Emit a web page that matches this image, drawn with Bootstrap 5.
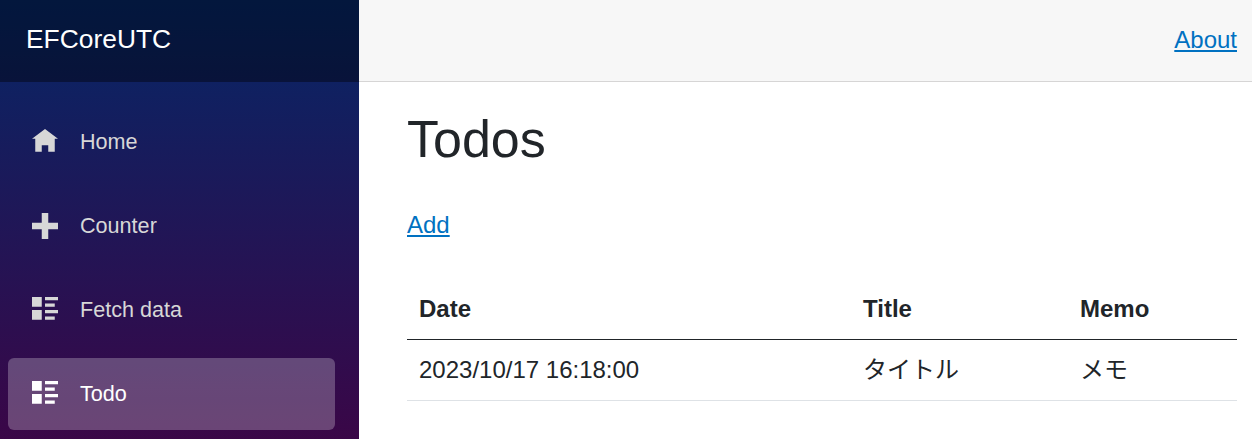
<!DOCTYPE html>
<html lang="en">
  <head>
    <meta charset="UTF-8" />
    <meta name="viewport" content="width=device-width, initial-scale=1" />
    <title>Todos</title>
    <link href="https://cdn.jsdelivr.net/npm/bootstrap@5.3.3/dist/css/bootstrap.min.css" rel="stylesheet" />
    <script src="https://cdn.jsdelivr.net/npm/bootstrap@5.3.3/dist/js/bootstrap.bundle.min.js"></script>
    <style>
      html, body {
        height: 100%;
        overflow: hidden;
      }

      body {
        font-family: "Liberation Sans", Arial, "Noto Sans CJK JP", sans-serif;
        font-size: 24px;
        color: #212529;
      }

      a {
        color: #0071c1;
      }

      .app-shell {
        height: 439px;
      }

      .side-panel {
        width: 359px;
        background: linear-gradient(180deg, #052767 0, #3a0647 440px);
      }

      .brand-row {
        height: 82px;
        background: rgba(0, 0, 0, 0.4);
        padding-left: 26px;
        padding-bottom: 2px;
      }

      .brand-row a {
        font-size: 26.4px;
        color: #fff;
        text-decoration: none;
      }

      .side-menu {
        padding: 24px 24px 0 8px;
        gap: 12px;
      }

      .side-menu .nav-link {
        height: 72px;
        padding: 0 0 0 24px;
        font-size: 21.6px;
        color: #d7d7d7;
        border-radius: 6px;
      }

      .side-menu .nav-link.active {
        background: rgba(255, 255, 255, 0.25);
        color: #fff;
      }

      .menu-icon {
        width: 26px;
        height: 26px;
        margin-right: 22px;
        fill: currentColor;
        flex-shrink: 0;
      }

      .top-strip {
        height: 82px;
        background: #f7f7f7;
        border-bottom: 1px solid #d6d5d5;
        padding-right: 15px;
        padding-bottom: 2px;
      }

      .page-body {
        padding: 0 15px 0 48px;
      }

      .page-body h1 {
        font-size: 52px;
        font-weight: 400;
        line-height: 1.2;
        margin: 26px 0 37px;
      }

      .add-line {
        margin-bottom: 36px;
      }

      .todo-table {
        color: #212529;
      }

      .todo-table th,
      .todo-table td {
        padding: 12px;
      }

      .todo-table thead th {
        border-bottom-color: #212529;
      }

      .col-date {
        width: 444px;
      }

      .col-title {
        width: 217px;
      }
    </style>
  </head>
  <body>
    <div class="app-shell d-flex">
      <div class="side-panel flex-shrink-0">
        <div class="brand-row d-flex align-items-center">
          <a href="#">EFCoreUTC</a>
        </div>
        <nav class="side-menu nav flex-column">
          <a class="nav-link d-flex align-items-center" href="#">
            <svg class="menu-icon" viewBox="0 0 8 8"><path d="M4 0L0 3h1v4h2V5h2v2h2V3h1L4 0z" /></svg>
            Home
          </a>
          <a class="nav-link d-flex align-items-center" href="#">
            <svg class="menu-icon" viewBox="0 0 8 8"><path d="M3 0v3H0v2h3v3h2V5h3V3H5V0H3z" /></svg>
            Counter
          </a>
          <a class="nav-link d-flex align-items-center" href="#">
            <svg class="menu-icon" viewBox="0 0 8 8"><path d="M0 0v3h3V0H0zm4 0v1h4V0H4zm0 2v1h3V2H4zM0 4v3h3V4H0zm4 0v1h4V4H4zm0 2v1h3V6H4z" /></svg>
            Fetch data
          </a>
          <a class="nav-link active d-flex align-items-center" href="#">
            <svg class="menu-icon" viewBox="0 0 8 8"><path d="M0 0v3h3V0H0zm4 0v1h4V0H4zm0 2v1h3V2H4zM0 4v3h3V4H0zm4 0v1h4V4H4zm0 2v1h3V6H4z" /></svg>
            Todo
          </a>
        </nav>
      </div>
      <div class="flex-grow-1">
        <div class="top-strip d-flex align-items-center justify-content-end">
          <a href="#">About</a>
        </div>
        <div class="page-body">
          <h1>Todos</h1>
          <p class="add-line"><a href="#">Add</a></p>
          <table class="table todo-table">
            <thead>
              <tr>
                <th class="col-date">Date</th>
                <th class="col-title">Title</th>
                <th>Memo</th>
              </tr>
            </thead>
            <tbody>
              <tr>
                <td>2023/10/17 16:18:00</td>
                <td>タイトル</td>
                <td>メモ</td>
              </tr>
            </tbody>
          </table>
        </div>
      </div>
    </div>
  </body>
</html>
